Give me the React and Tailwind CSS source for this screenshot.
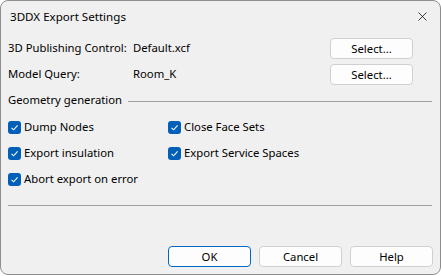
import { X } from 'lucide-react'

const font = { fontFamily: '"Noto Sans", "Liberation Sans", sans-serif' }

function Check({ label }) {
  return (
    <label className="flex items-center gap-[3px] h-[26px] whitespace-nowrap">
      <span className="w-[13px] h-[13px] rounded-[3px] bg-[#005fb8] flex items-center justify-center">
        <svg width="9" height="9" viewBox="0 0 9 9" fill="none">
          <path d="M1.5 4.8 L3.6 6.8 L7.6 2.3" stroke="white" strokeWidth="1.1" />
        </svg>
      </span>
      <span>{label}</span>
    </label>
  )
}

function Btn({ children, primary }) {
  return (
    <button
      className={
        primary
          ? 'w-[83px] h-[21px] rounded-[4px] bg-[#fdfdfd] border border-[#0067c0] text-[11.3px] text-black leading-none'
          : 'w-[83px] h-[21px] rounded-[4px] bg-[#fdfdfd] border border-[#d0d0d0] text-[11.3px] text-black leading-none'
      }
    >
      {children}
    </button>
  )
}

export default function App() {
  return (
    <div className="w-[442px] h-[276px] bg-white" style={font}>
      <div className="w-[441px] h-[275px] bg-[#f0f0f0] border border-[#8e8e8e] rounded-[8px] flex flex-col text-[11.3px] text-black overflow-hidden">
        <div className="h-[31px] flex items-center justify-between pl-[9px] pr-[10px] shrink-0">
          <span className="text-[11.6px]">3DDX Export Settings</span>
          <X size={15} strokeWidth={1.2} />
        </div>
        <div className="flex flex-col pl-[7px] pr-[7px]">
          <div className="flex items-center h-[21px] mt-[6px] whitespace-nowrap">
            <span className="w-[125px]">3D Publishing Control:</span>
            <span className="flex-1">Default.xcf</span>
            <div className="mr-[20px]"><Btn>Select...</Btn></div>
          </div>
          <div className="flex items-center h-[21px] mt-[5px] whitespace-nowrap">
            <span className="w-[125px]">Model Query:</span>
            <span className="flex-1">Room_K</span>
            <div className="mr-[20px]"><Btn>Select...</Btn></div>
          </div>
          <div className="flex items-center gap-[6px] h-[16px] mt-[7px]">
            <span>Geometry generation</span>
            <div className="flex-1 h-px bg-[#a0a0a0] mr-[1px] mt-[2px]" />
          </div>
          <div className="grid grid-cols-[160px_1fr] mt-[6px]">
            <Check label="Dump Nodes" />
            <Check label="Close Face Sets" />
            <Check label="Export insulation" />
            <Check label="Export Service Spaces" />
            <Check label="Abort export on error" />
          </div>
          <div className="h-px bg-[#a0a0a0] mt-[13px] mr-[1px]" />
        </div>
        <div className="flex justify-end gap-[8px] pr-[7px] mt-auto mb-[7px]">
          <Btn primary>OK</Btn>
          <Btn>Cancel</Btn>
          <Btn>Help</Btn>
        </div>
      </div>
    </div>
  )
}
